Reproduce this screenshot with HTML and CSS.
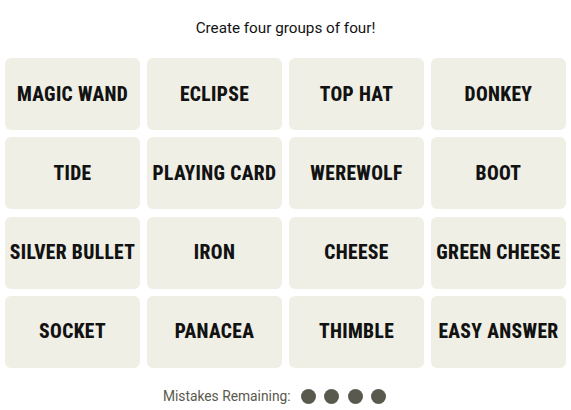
FILE: index.html
```html
<!DOCTYPE html>
<html lang="en">
<head>
<meta charset="utf-8">
<title>Connections</title>
<link rel="stylesheet" href="styles.css">
</head>
<body>
<main class="game">
  <p class="prompt">Create four groups of four!</p>
  <div class="board">
    <button class="tile">MAGIC WAND</button>
    <button class="tile">ECLIPSE</button>
    <button class="tile">TOP HAT</button>
    <button class="tile">DONKEY</button>
    <button class="tile">TIDE</button>
    <button class="tile">PLAYING CARD</button>
    <button class="tile">WEREWOLF</button>
    <button class="tile">BOOT</button>
    <button class="tile">SILVER BULLET</button>
    <button class="tile">IRON</button>
    <button class="tile">CHEESE</button>
    <button class="tile">GREEN CHEESE</button>
    <button class="tile">SOCKET</button>
    <button class="tile">PANACEA</button>
    <button class="tile">THIMBLE</button>
    <button class="tile">EASY ANSWER</button>
  </div>
  <div class="mistakes">
    <span class="mistakes-label">Mistakes Remaining:</span>
    <span class="dots">
      <span class="dot"></span>
      <span class="dot"></span>
      <span class="dot"></span>
      <span class="dot"></span>
    </span>
  </div>
</main>
</body>
</html>
```

FILE: styles.css
```css
html, body {
  margin: 0;
  padding: 0;
  background: #ffffff;
}

.game {
  width: 571px;
  padding: 0 5px;
  box-sizing: border-box;
  font-family: Roboto, "Liberation Sans", sans-serif;
  color: #121212;
}

.prompt {
  margin: 0;
  padding-top: 18px;
  height: 20px;
  line-height: 20px;
  font-size: 15.25px;
  text-align: center;
  margin-bottom: 20px;
}

.board {
  display: grid;
  grid-template-columns: repeat(4, 135px);
  grid-template-rows: repeat(4, 72px);
  column-gap: 7px;
  row-gap: 7.33px;
}

.tile {
  border: none;
  margin: 0;
  padding: 0;
  background: #efefe6;
  border-radius: 6px;
  font-family: Roboto, "Liberation Sans", sans-serif;
  font-weight: 800;
  font-stretch: 85%;
  font-size: 19.5px;
  letter-spacing: 0.35px;
  color: #121212;
  text-align: center;
  white-space: nowrap;
}

.mistakes {
  margin-top: 21px;
  height: 15px;
  display: flex;
  align-items: center;
  justify-content: center;
  padding-right: 22px;
}

.mistakes-label {
  font-size: 13.8px;
  color: #5a594e;
  margin-right: 10px;
}

.dots {
  display: flex;
  gap: 8.5px;
}

.dot {
  width: 15px;
  height: 15px;
  border-radius: 50%;
  background: #5a594e;
}
```
